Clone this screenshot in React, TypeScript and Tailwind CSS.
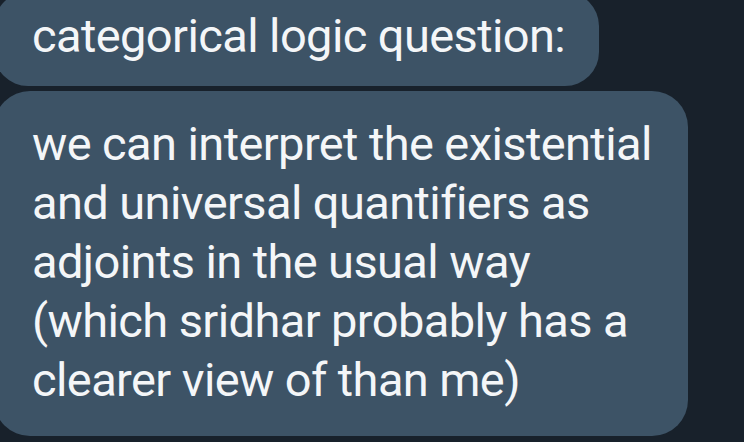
export default function App() {
  return (
    <div
      className="w-[744px] h-[442px] overflow-hidden bg-[#18212b] text-[#f4f6f8]"
      style={{ fontFamily: "Roboto, 'Noto Sans', sans-serif" }}
    >
      <div className="flex flex-col items-start gap-[5px] -ml-[6px] -mt-[8px] tracking-[-0.6px]">
        <div className="rounded-[34px] bg-[#3d5366] pl-[38px] pr-[34px] pt-[14px] pb-[21px] text-[47px] leading-[59px]">
          categorical logic question:
        </div>
        <div className="rounded-[36px] bg-[#3d5366] pl-[38px] pr-[36px] pt-[23px] pb-[27px] text-[47px] leading-[59px]">
          <div>we can interpret the existential</div>
          <div>and universal quantifiers as</div>
          <div>adjoints in the usual way</div>
          <div>(which sridhar probably has a</div>
          <div>clearer view of than me)</div>
        </div>
      </div>
    </div>
  );
}
